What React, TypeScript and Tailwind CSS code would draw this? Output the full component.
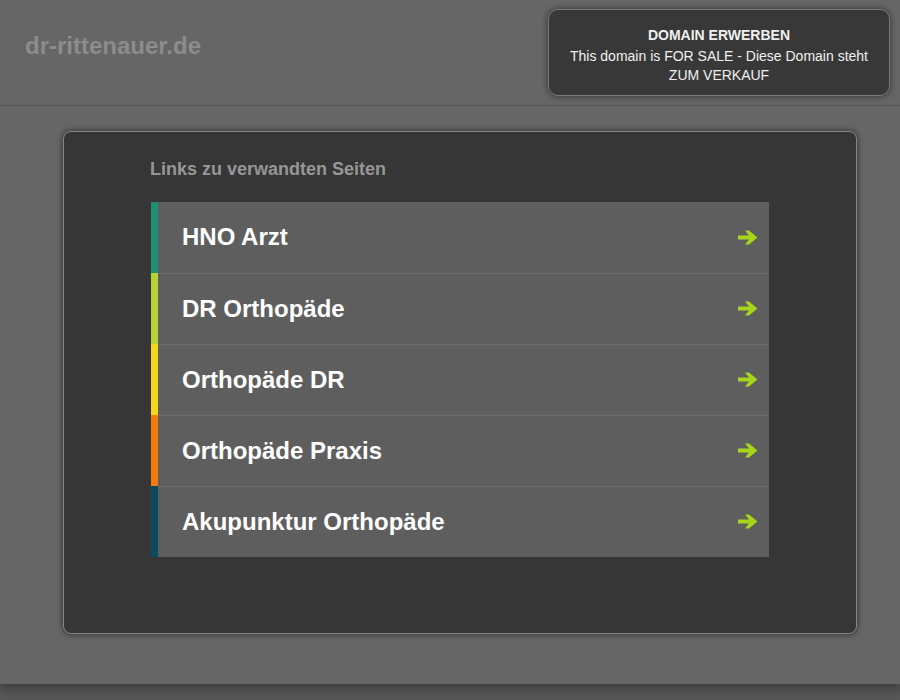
const links = [
  { label: 'HNO Arzt', stripe: 'bg-[#1f8f72]' },
  { label: 'DR Orthopäde', stripe: 'bg-[#b6d334]' },
  { label: 'Orthopäde DR', stripe: 'bg-[#f4d51f]' },
  { label: 'Orthopäde Praxis', stripe: 'bg-[#f57b0c]' },
  { label: 'Akupunktur Orthopäde', stripe: 'bg-[#0b4b5f]' },
]

const Arrow = () => (
  <svg width="20" height="17" viewBox="0 0 20 17" className="shrink-0">
    <polygon points="0,6.5 11,6.5 7,1.5 11,1.5 19.5,8.5 11,15.5 7,15.5 11,10.5 0,10.5" fill="#a6d61b" />
  </svg>
)

const App = () => {
  return (
    <div className="h-[700px] bg-[#575757] overflow-hidden" style={{ fontFamily: '"Liberation Sans", Arial, sans-serif' }}>
      <div className="h-[684px] bg-[#666666] shadow-[0_4px_10px_rgba(0,0,0,0.35)] flex flex-col">
        {/* Header */}
        <header className="h-[106px] border-b border-[#555555] flex items-start justify-between shrink-0">
          <div className="pl-[25px] pt-[31px] text-[24px] leading-[30px] font-bold text-[#8c8c8c]">dr-rittenauer.de</div>
          <div className="mt-[9px] mr-[10px] w-[342px] h-[87px] rounded-[10px] border border-[#7a7a7a] bg-[#383838] shadow-[0_0_6px_rgba(0,0,0,0.55)] flex flex-col items-center pt-[16px] text-[14px] leading-[19px] text-center text-[#f0f0f0]">
            <div className="font-bold">DOMAIN ERWERBEN</div>
            <div className="mt-[2px] px-4">This domain is FOR SALE - Diese Domain steht ZUM VERKAUF</div>
          </div>
        </header>

        {/* Main panel */}
        <main className="ml-[63px] mt-[25px] w-[794px] h-[503px] rounded-[8px] border border-[#858585] bg-[#363636] shadow-[0_0_6px_rgba(0,0,0,0.6)] flex flex-col items-center">
          <div className="w-[618px] pt-[26px]">
            <h2 className="text-[18px] leading-[22px] font-bold text-[#969696] -ml-[1px]">Links zu verwandten Seiten</h2>
            <ul className="mt-[22px]">
              {links.map((link, i) => (
                <li key={i} className="flex h-[71px]">
                  <div className={`w-[7px] ${link.stripe}`}></div>
                  <div className={`flex-1 flex items-center justify-between bg-[#5e5e5e] pl-[24px] pr-[11px] pb-[1px] ${i > 0 ? 'border-t border-[#6c6c6c]' : ''}`}>
                    <span className="text-[24px] leading-[30px] font-bold text-white">{link.label}</span>
                    <Arrow />
                  </div>
                </li>
              ))}
            </ul>
          </div>
        </main>
      </div>
    </div>
  )
}

export default App
